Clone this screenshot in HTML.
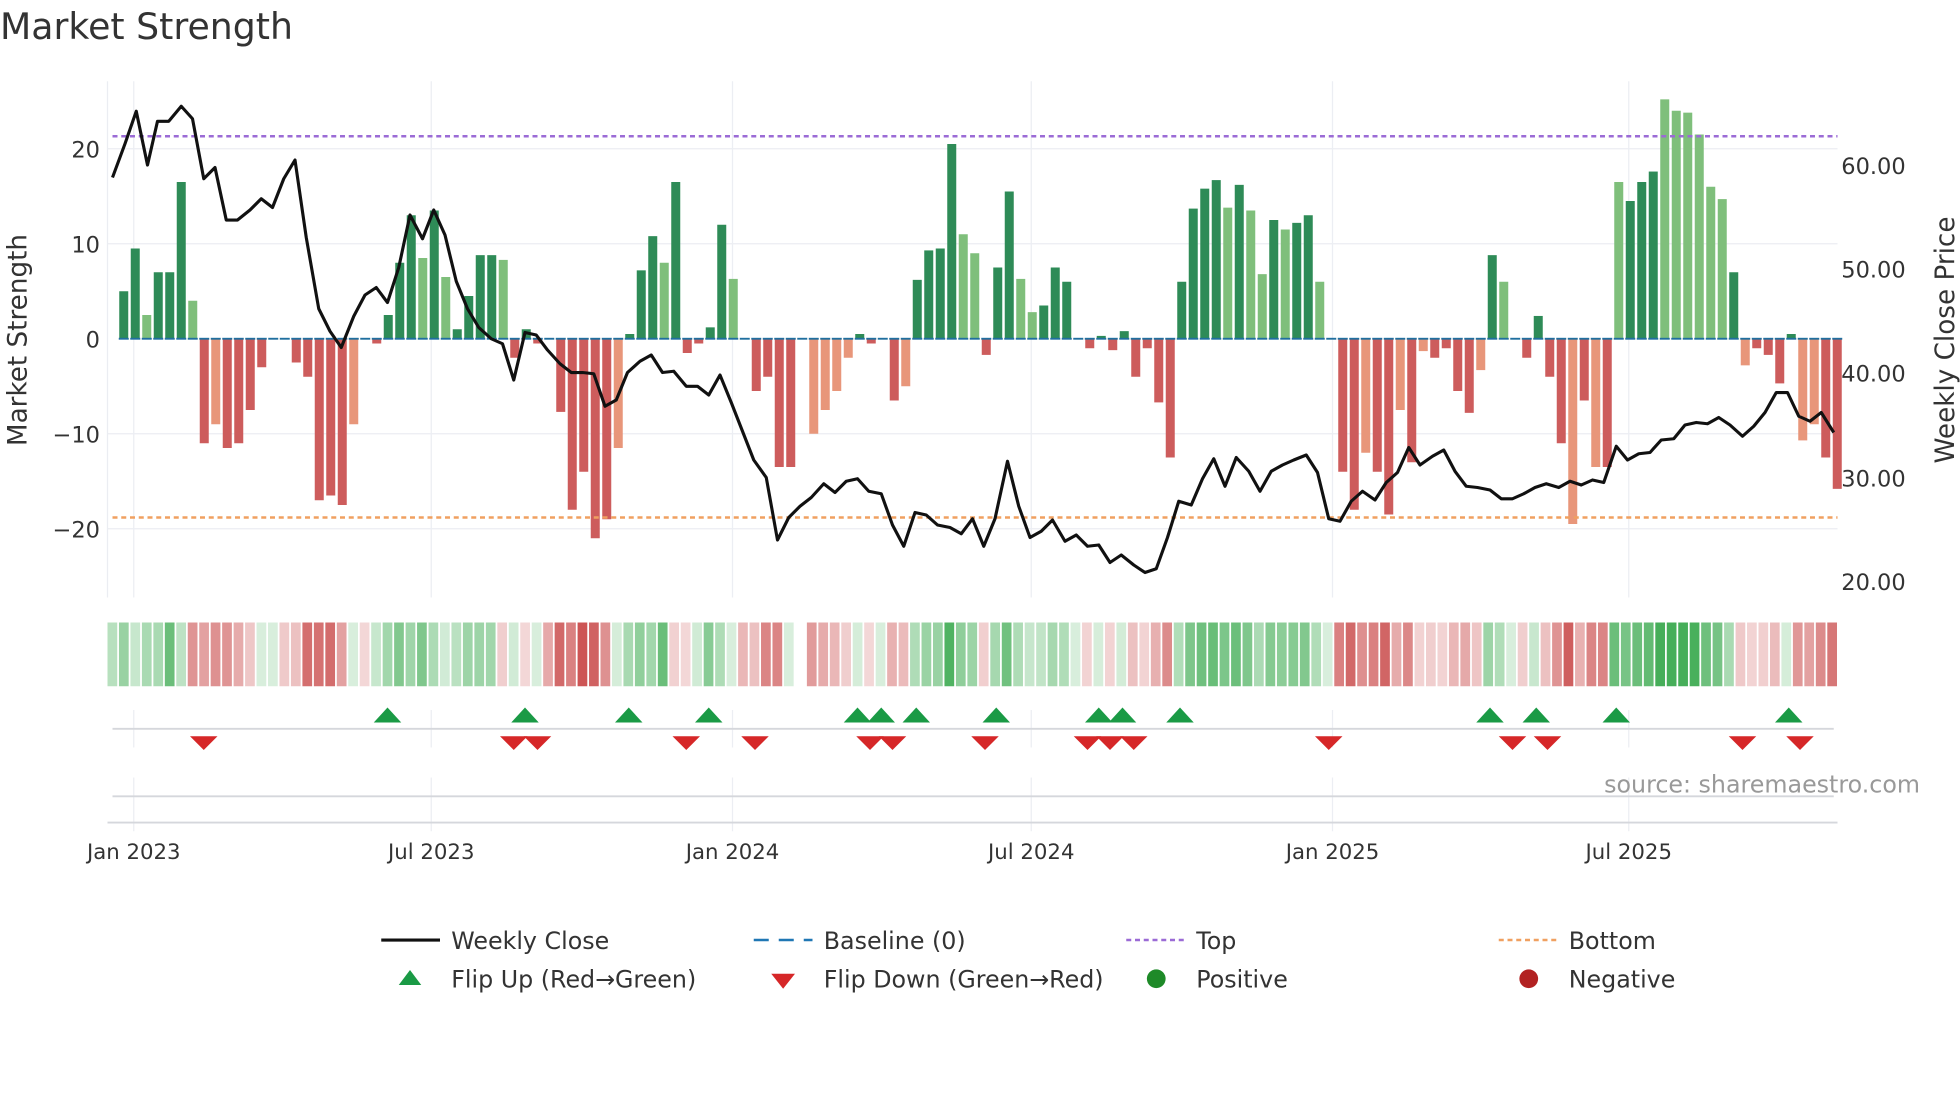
<!DOCTYPE html>
<html><head><meta charset="utf-8"><style>
html,body{margin:0;padding:0;background:#fff;width:1960px;height:1102px;overflow:hidden}
svg{display:block}
text{font-family:"DejaVu Sans","Liberation Sans",sans-serif;fill:#333}
</style></head><body>
<svg id="s" width="1960" height="1102" viewBox="0 0 1568 881.6" xmlns="http://www.w3.org/2000/svg">
<text x="0" y="31" font-size="29">Market Strength</text>
<g stroke="#ebedf2" stroke-width="1">
<line x1="86" y1="119" x2="1470" y2="119"/><line x1="86" y1="195" x2="1470" y2="195"/>
<line x1="86" y1="347" x2="1470" y2="347"/><line x1="86" y1="423" x2="1470" y2="423"/>
<line x1="86" y1="65" x2="86" y2="478"/>
</g>
<g id="vg" stroke="#eceef3" stroke-width="1"></g>
<g id="bars"></g>
<line x1="90" y1="109" x2="1470" y2="109" stroke="#9b6bd6" stroke-width="2" stroke-dasharray="4,3"/>
<line x1="90" y1="414" x2="1470" y2="414" stroke="#f0a060" stroke-width="2" stroke-dasharray="4,3"/>
<polyline id="pl" fill="none" stroke="#111" stroke-width="2.5" stroke-linejoin="round"/>
<g font-size="18" text-anchor="end">
<text x="80" y="126">20</text><text x="80" y="202">10</text><text x="80" y="278">0</text>
<text x="80" y="354">−10</text><text x="80" y="430">−20</text>
</g>
<g font-size="18">
<text x="1473" y="139">60.00</text><text x="1473" y="222">50.00</text><text x="1473" y="305">40.00</text>
<text x="1473" y="389">30.00</text><text x="1473" y="472">20.00</text>
</g>
<text transform="translate(21,272) rotate(-90)" font-size="21" text-anchor="middle">Market Strength</text>
<text transform="translate(1563,272) rotate(-90)" font-size="21" text-anchor="middle">Weekly Close Price</text>
<g id="heat"></g>
<g stroke="#d5d7dc" stroke-width="1.5">
<line x1="90" y1="583" x2="1467" y2="583"/><line x1="90" y1="637" x2="1467" y2="637"/>
<line x1="86" y1="658" x2="1470" y2="658"/>
</g>
<g id="tri"></g>
<text x="1536" y="634" font-size="19" text-anchor="end" style="fill:#999">source: sharemaestro.com</text>
<g font-size="17" text-anchor="middle">
<text x="107" y="687">Jan 2023</text><text x="345" y="687">Jul 2023</text><text x="586" y="687">Jan 2024</text>
<text x="825" y="687">Jul 2024</text><text x="1066" y="687">Jan 2025</text><text x="1303" y="687">Jul 2025</text>
</g>
<g font-size="19">
<line x1="305" y1="752" x2="352" y2="752" stroke="#111" stroke-width="2.5"/>
<text x="361" y="759">Weekly Close</text>
<line x1="603" y1="752" x2="650" y2="752" stroke="#1f77b4" stroke-width="2" stroke-dasharray="12,8"/>
<text x="659" y="759">Baseline (0)</text>
<line x1="901" y1="752" x2="948" y2="752" stroke="#9b6bd6" stroke-width="2" stroke-dasharray="4,3"/>
<text x="957" y="759">Top</text>
<line x1="1199" y1="752" x2="1246" y2="752" stroke="#f0a060" stroke-width="2" stroke-dasharray="4,3"/>
<text x="1255" y="759">Bottom</text>
<polygon points="319,788 328,776 337,788" fill="#1a9a45"/>
<text x="361" y="790">Flip Up (Red→Green)</text>
<polygon points="617,779 636,779 626.5,791" fill="#d62728"/>
<text x="659" y="790">Flip Down (Green→Red)</text>
<circle cx="925" cy="783" r="7.5" fill="#1e8a28"/>
<text x="957" y="790">Positive</text>
<circle cx="1223" cy="783" r="7.5" fill="#b22222"/>
<text x="1255" y="790">Negative</text>
</g>
</svg>
<script>
var NS="http://www.w3.org/2000/svg";
function el(t,a,p){var e=document.createElementNS(NS,t);for(var k in a)e.setAttribute(k,a[k]);document.getElementById(p).appendChild(e);return e;}
var v=[5,9.5,2.5,7,7,16.5,4,-11,-9,-11.5,-11,-7.5,-3,0,0,-2.5,-4,-17,-16.5,-17.5,-9,0,-0.5,2.5,8,13,8.5,13.5,6.5,1,4.5,8.8,8.8,8.3,-2,1,-0.5,0,-7.7,-18,-14,-21,-19,-11.5,0.5,7.2,10.8,8,16.5,-1.5,-0.5,1.2,12,6.3,0,-5.5,-4,-13.5,-13.5,0,-10,-7.5,-5.5,-2,0.5,-0.5,0,-6.5,-5,6.2,9.3,9.5,20.5,11,9,-1.7,7.5,15.5,6.3,2.8,3.5,7.5,6,0,-1,0.3,-1.2,0.8,-4,-1,-6.7,-12.5,6,13.7,15.8,16.7,13.8,16.2,13.5,6.8,12.5,11.5,12.2,13,6,0,-14,-18,-12,-14,-18.5,-7.5,-13,-1.3,-2,-1,-5.5,-7.8,-3.3,8.8,6,0,-2,2.4,-4,-11,-19.5,-6.5,-13.5,-13.5,16.5,14.5,16.5,17.6,25.2,24,23.8,21.5,16,14.7,7,-2.8,-1,-1.7,-4.7,0.5,-10.7,-9,-12.5,-15.8];
var light={2:1,6:1,8:1,20:1,26:1,28:1,33:1,43:1,47:1,53:1,60:1,61:1,62:1,63:1,68:1,73:1,74:1,78:1,79:1,83:1,96:1,98:1,99:1,101:1,104:1,108:1,111:1,113:1,118:1,120:1,126:1,128:1,130:1,134:1,135:1,136:1,137:1,138:1,139:1,141:1,146:1,147:1};
var x0=99,dx=9.2,z=271,u=7.6;
[107,345,586,825,1066,1303].forEach(function(x){el("line",{x1:x,y1:65,x2:x,y2:478},"vg");el("line",{x1:x,y1:568,x2:x,y2:598},"vg");el("line",{x1:x,y1:622,x2:x,y2:665},"vg");});
var n=v.length,hx0=86,hdx=(1471-86)/(n+1);
v.forEach(function(s,i){
 var x=x0+i*dx,h=Math.abs(s)*u,pos=s>=0,l=light[i];
 var c=pos?(l?"#7fbf7b":"#2e8b57"):(l?"#e8967a":"#cd5c5c");
 if(h>0.5)el("rect",{x:x-3.6,y:pos?z-h:z,width:7.2,height:h,fill:c},"bars");
 el("line",{x1:x-4,y1:z,x2:x+4,y2:z,stroke:"#1f6f9f","stroke-width":1.5},"bars");
 var hx=hx0+i*hdx;
 if(i>=60)hx+=hdx;
 var t=Math.min(1,Math.abs(s)/22),a=0.2+0.75*t;
 var col=pos?"rgba(60,170,80,"+a+")":"rgba(200,70,70,"+a+")";
 el("rect",{x:hx,y:498,width:hdx-1.4,height:51,fill:col},"heat");
});
var p=[[90,142],[100,115],[109,89],[118,132],[126,97],[135,97],[145,85],[154,95],[163,143],[172,134],[181,176],[190,176],[200,168],[209,159],[218,166],[227,143],[236,128],[245,190],[255,247],[264,265],[273,278],[283,253],[292,236],[301,230],[310,242],[319,214],[328,172],[338,191],[347,168],[356,188],[365,225],[374,247],[383,262],[393,271],[402,275],[411,304],[420,266],[429,268],[438,280],[448,291],[457,298],[466,298],[475,299],[484,325],[493,320],[502,298],[512,289],[521,284],[530,298],[539,297],[549,309],[558,309],[567,316],[576,300],[585,322],[594,345],[603,368],[613,382],[622,432],[631,414],[640,405],[649,398],[659,387],[668,394],[677,385],[686,383],[695,393],[705,395],[714,420],[723,437],[732,410],[741,412],[750,420],[760,422],[769,427],[778,415],[787,437],[796,415],[806,369],[815,405],[824,430],[833,425],[842,416],[852,433],[861,428],[870,437],[879,436],[888,450],[897,444],[907,452],[916,458],[925,455],[934,430],[943,401],[953,404],[962,383],[971,367],[980,389],[989,366],[999,377],[1008,393],[1017,377],[1026,372],[1035,368],[1045,364],[1054,378],[1063,415],[1072,417],[1081,401],[1090,393],[1100,400],[1109,386],[1118,378],[1127,358],[1136,372],[1146,365],[1155,360],[1164,377],[1173,389],[1182,390],[1192,392],[1201,399],[1210,399],[1219,395],[1228,390],[1237,387],[1247,390],[1256,385],[1265,388],[1274,384],[1283,386],[1293,357],[1302,368],[1311,363],[1320,362],[1329,352],[1339,351],[1348,340],[1357,338],[1366,339],[1375,334],[1384,340],[1394,349],[1403,341],[1412,330],[1421,314],[1430,314],[1439,333],[1448,337],[1457,330],[1467,346]];
document.getElementById("pl").setAttribute("points",p.map(function(q){return q.join(",")}).join(" "));
[310,420,503,567,686,705,733,797,879,898,944,1192,1229,1293,1431].forEach(function(x){el("polygon",{points:(x-11)+",578 "+x+",566 "+(x+11)+",578",fill:"#1a9a45"},"tri");});
[163,411,430,549,604,696,714,788,870,888,907,1063,1210,1238,1394,1440].forEach(function(x){el("polygon",{points:(x-11)+",589 "+(x+11)+",589 "+x+",600",fill:"#d62728"},"tri");});
</script>
</body></html>
